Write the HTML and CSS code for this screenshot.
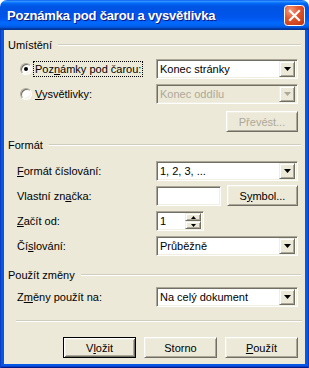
FILE: index.html
```html
<!DOCTYPE html>
<html lang="cs">
<head>
<meta charset="utf-8">
<title>Poznámka pod čarou a vysvětlivka</title>
<link rel="stylesheet" href="styles.css">
</head>
<body>
<div class="window">
  <div class="titlebar">
    <span class="title">Poznámka pod čarou a vysvětlivka</span>
    <span class="close">
      <svg width="21" height="21" viewBox="0 0 21 21">
        <defs>
          <radialGradient id="cg" cx="0.3" cy="0.25" r="0.9">
            <stop offset="0" stop-color="#F59B7E"/>
            <stop offset="0.45" stop-color="#E2562F"/>
            <stop offset="1" stop-color="#C43A15"/>
          </radialGradient>
        </defs>
        <rect x="0.5" y="0.5" width="20" height="20" rx="3" fill="url(#cg)" stroke="#fff"/>
        <path d="M6 6 L15 15 M15 6 L6 15" stroke="#fff" stroke-width="2.2" stroke-linecap="square"/>
      </svg>
    </span>
  </div>
  <div class="frame">
    <div class="client">
      <div class="group g1"><span>Umístění</span><i class="line"></i></div>

      <div class="row m7">
        <div class="rlbl"><span class="radio"><span class="dot"></span></span><span class="focus">Poz<u>n</u>ámky pod čarou:</span></div>
        <div class="combo"><span class="val">Konec stránky</span><span class="drop"><svg width="7" height="4" viewBox="0 0 7 4"><path d="M0 0 H7 L3.5 4 Z" fill="#000"/></svg></span></div>
      </div>

      <div class="row m5">
        <div class="rlbl"><span class="radio"></span><span class="focus nofocus"><u>V</u>ysvětlivky:</span></div>
        <div class="combo disabled"><span class="val">Konec oddílu</span><span class="drop"><svg width="7" height="4" viewBox="0 0 7 4"><path d="M0 0 H7 L3.5 4 Z" fill="#ACA899"/></svg></span></div>
      </div>

      <div class="btnrow m7">
        <span class="btn disabledbtn w72">Převést...</span>
      </div>

      <div class="group g2"><span>Formát</span><i class="line"></i></div>

      <div class="row m9">
        <div class="lbl"><u>F</u>ormát číslování:</div>
        <div class="combo"><span class="val">1, 2, 3, ...</span><span class="drop"><svg width="7" height="4" viewBox="0 0 7 4"><path d="M0 0 H7 L3.5 4 Z" fill="#000"/></svg></span></div>
      </div>

      <div class="row h21 m4">
        <div class="lbl">Vlastní zn<u>a</u>čka:</div>
        <div class="pair">
          <span class="edit"></span>
          <span class="btn w71">S<u>y</u>mbol...</span>
        </div>
      </div>

      <div class="row m5">
        <div class="lbl"><u>Z</u>ačít od:</div>
        <div class="spin">
          <span class="val">1</span>
          <span class="spinbtns">
            <span class="sb"><svg width="5" height="3" viewBox="0 0 5 3"><path d="M0 3 H5 L2.5 0 Z" fill="#000"/></svg></span>
            <span class="sb"><svg width="5" height="3" viewBox="0 0 5 3"><path d="M0 0 H5 L2.5 3 Z" fill="#000"/></svg></span>
          </span>
        </div>
      </div>

      <div class="row m5">
        <div class="lbl">Čí<u>s</u>lování:</div>
        <div class="combo"><span class="val">Průběžně</span><span class="drop"><svg width="7" height="4" viewBox="0 0 7 4"><path d="M0 0 H7 L3.5 4 Z" fill="#000"/></svg></span></div>
      </div>

      <div class="group g3"><span>Použít změny</span><i class="line"></i></div>

      <div class="row m5">
        <div class="lbl">Z<u>m</u>ěny použít na:</div>
        <div class="combo"><span class="val">Na celý dokument</span><span class="drop"><svg width="7" height="4" viewBox="0 0 7 4"><path d="M0 0 H7 L3.5 4 Z" fill="#000"/></svg></span></div>
      </div>

      <div class="sep"></div>

      <div class="btnrow actions">
        <span class="btn default">V<u>l</u>ožit</span>
        <span class="btn">Storno</span>
        <span class="btn"><u>P</u>oužít</span>
      </div>
    </div>
  </div>
</div>
</body>
</html>
```
FILE: styles.css
```css
* { box-sizing: border-box; margin: 0; padding: 0; }
body {
  margin: 0;
  background: #ffffff;
  font-family: "Liberation Sans", Arial, sans-serif;
  font-size: 11px;
  color: #000;
}
u { text-decoration: underline; text-underline-offset: 1px; }

.window {
  width: 309px;
  height: 368px;
  display: flex;
  flex-direction: column;
}
.titlebar {
  flex: 0 0 30px;
  height: 30px;
  border-radius: 7px 7px 0 0;
  background: linear-gradient(to bottom,
    #0058EE 0%, #3A93FF 4%, #288EFF 6%, #127DFF 8%, #036FFC 10%,
    #0262EE 14%, #0057E5 20%, #0054E3 24%, #0055EB 56%, #005BF5 66%,
    #026AFE 76%, #0062EF 86%, #0052D6 92%, #0040AB 94%, #003092 100%);
  display: flex;
  align-items: center;
  padding: 0 4px 0 7px;
}
.title {
  color: #fff;
  font-weight: bold;
  font-size: 13px;
  letter-spacing: -0.2px;
  text-shadow: 1px 1px #0A1883;
  padding-top: 1px;
}
.close { margin-left: auto; width: 21px; height: 21px; display: block; }
.close svg { display: block; }

.frame {
  flex: 1;
  display: flex;
  padding: 0 4px 4px;
  background: #0757E6;
  box-shadow: inset 1px 0 #0A3FC4, inset -1px 0 #0A3FC4, inset 0 -1px #001A8C, inset 0 -2px #0A3FC4;
}
.client {
  flex: 1;
  background: #ECE9D8;
  display: flex;
  flex-direction: column;
  padding: 0 7px 0 0;
}

.group {
  display: flex;
  align-items: center;
  height: 14px;
  padding-left: 4px;
  margin-right: -3px;
}
.group .line {
  flex: 1;
  margin-left: 6px;
  height: 2px;
  border-top: 1px solid #D0CDBE;
  border-bottom: 1px solid #ffffff;
}
.g1 { margin-top: 8px; }
.g2 { margin-top: 6px; }
.g3 { margin-top: 12px; }

.row {
  display: grid;
  grid-template-columns: 152px 142px;
  align-items: center;
  height: 20px;
}
.h21 { height: 21px; }
.m4 { margin-top: 4px; }
.m5 { margin-top: 5px; }
.m7 { margin-top: 7px; }
.m9 { margin-top: 9px; }

.lbl { padding-left: 13px; white-space: nowrap; }

.rlbl {
  display: flex;
  align-items: center;
  padding-left: 16px;
  white-space: nowrap;
}
.radio {
  width: 12px;
  height: 12px;
  border-radius: 50%;
  border: 1px solid;
  border-color: #ACA899 #ffffff #ffffff #ACA899;
  background: #fff;
  box-shadow: inset 1px 1px #716F64, inset -1px -1px #F1EFE2;
  display: flex;
  align-items: center;
  justify-content: center;
  flex: 0 0 12px;
}
.dot { width: 4px; height: 4px; border-radius: 50%; background: #000; }
.focus {
  margin-left: 1px;
  padding: 1px 1px 1px 1px;
  border: 1px dotted #000;
  line-height: 12px;
}
.nofocus { border-color: transparent; }

.combo, .edit, .spin {
  height: 20px;
  background: #fff;
  border: 1px solid;
  border-color: #ACA899 #ffffff #ffffff #ACA899;
  box-shadow: inset 1px 1px #716F64, inset -1px -1px #F1EFE2;
  display: flex;
  align-items: center;
  padding: 2px;
}
.combo .val, .spin .val { flex: 1; padding-left: 1px; white-space: nowrap; overflow: hidden; }
.drop {
  width: 16px;
  height: 16px;
  flex: 0 0 16px;
  background: #ECE9D8;
  border: 1px solid;
  border-color: #F1EFE2 #716F64 #716F64 #F1EFE2;
  box-shadow: inset 1px 1px #fff, inset -1px -1px #ACA899;
  display: flex;
  align-items: center;
  justify-content: center;
}
.drop svg { display: block; }
.combo.disabled { background: #ECE9D8; }
.combo.disabled .val { color: #ACA899; }

.pair { display: flex; align-items: center; justify-content: space-between; }
.edit { width: 65px; }
.spin { width: 48px; }
.spinbtns { display: flex; flex-direction: column; width: 16px; height: 16px; gap: 0; }
.sb {
  height: 8px;
  background: #ECE9D8;
  border: 1px solid;
  border-color: #F1EFE2 #716F64 #716F64 #F1EFE2;
  box-shadow: inset 1px 1px #fff, inset -1px -1px #ACA899;
  display: flex;
  align-items: center;
  justify-content: center;
}
.sb svg { display: block; }

.btnrow { display: flex; justify-content: flex-end; height: 21px; }
.btn {
  width: 73px;
  height: 21px;
  background: #ECE9D8;
  border: 1px solid;
  border-color: #ffffff #716F64 #716F64 #ffffff;
  box-shadow: inset 1px 1px #F1EFE2, inset -1px -1px #ACA899;
  display: flex;
  align-items: center;
  justify-content: center;
  white-space: nowrap;
}
.w72 { width: 72px; }
.w71 { width: 71px; }
.disabledbtn { color: #ACA899; }
.btn.default {
  border: 1px solid #000;
  box-shadow: inset 1px 1px #fff, inset -1px -1px #716F64, inset 2px 2px #F1EFE2, inset -2px -2px #ACA899;
}

.sep {
  margin: 13px -4px 0 12px;
  height: 2px;
  border-top: 1px solid #D0CDBE;
  border-bottom: 1px solid #fff;
}
.actions { margin-top: 15px; gap: 8px; }
```
